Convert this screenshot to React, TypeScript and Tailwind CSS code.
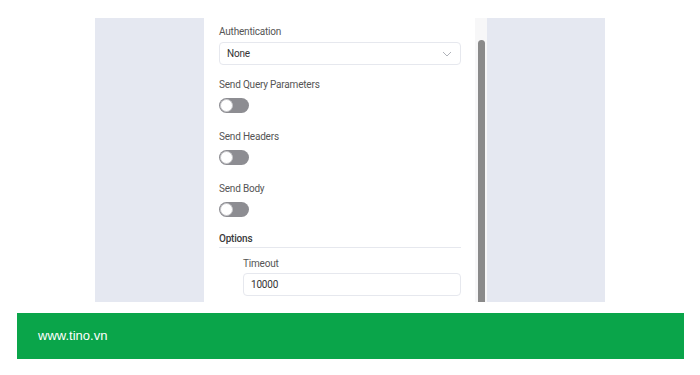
import React from 'react';

const Toggle: React.FC = () => (
  <div className="w-[30px] h-[15px] rounded-full bg-[#8d8d92] flex items-center px-[1px]">
    <div className="w-[13px] h-[13px] rounded-full bg-white border border-[#c9c9cc]" />
  </div>
);

const Label: React.FC<{ children: React.ReactNode; className?: string }> = ({ children, className }) => (
  <div className={`text-[10px] leading-[16px] tracking-[-0.02em] text-[#555] ${className ?? ''}`}>{children}</div>
);

export default function App() {
  return (
    <div className="w-[700px] h-[375px] bg-white font-['Roboto',sans-serif] overflow-hidden">
      {/* screenshot area */}
      <div className="ml-[95px] mt-[18px] w-[510px] h-[284px] flex bg-[#e5e8f1]">
        <div className="w-[109px]" />
        <div className="w-[271px] bg-white pl-[15px] pr-[14px] pt-[6px] overflow-hidden">
          <Label>Authentication</Label>
          <div className="mt-[2px] h-[23px] border border-[#e6e8ee] rounded-[4px] flex items-center justify-between pl-[7px] pr-[8px]">
            <span className="text-[10px] tracking-[-0.02em] text-[#333]">None</span>
            <svg width="10" height="6" viewBox="0 0 10 6" fill="none">
              <path d="M1 1l4 4 4-4" stroke="#b0b3ba" strokeWidth="1" />
            </svg>
          </div>

          <Label className="mt-[12px]">Send Query Parameters</Label>
          <div className="mt-[5px]"><Toggle /></div>

          <Label className="mt-[16px]">Send Headers</Label>
          <div className="mt-[5px]"><Toggle /></div>

          <Label className="mt-[16px]">Send Body</Label>
          <div className="mt-[5px]"><Toggle /></div>

          <div className="mt-[14px] border-b border-[#e6e8ee] text-[10px] leading-[16px] tracking-[-0.02em] font-medium text-[#3a3a3a]">
            Options
          </div>

          <div className="pl-[24px]">
            <Label className="mt-[8px]">Timeout</Label>
            <div className="mt-[1px] h-[23px] border border-[#e6e8ee] rounded-[4px] flex items-center pl-[7px]">
              <span className="text-[10px] tracking-[-0.02em] text-[#333]">10000</span>
            </div>
          </div>
        </div>
        {/* scrollbar */}
        <div className="w-[12px] bg-[#f7f7f8] pt-[22px] pl-[3px]">
          <div className="w-[7px] h-full rounded-t-full bg-[#8a8a8a]" />
        </div>
        <div className="flex-1" />
      </div>

      {/* footer */}
      <div className="mt-[11px] ml-[17px] w-[667px] h-[46px] bg-[#0aa54a] flex items-center pl-[21px]">
        <span className="text-white text-[13px] font-['Liberation_Sans',sans-serif]">www.tino.vn</span>
      </div>
    </div>
  );
}
